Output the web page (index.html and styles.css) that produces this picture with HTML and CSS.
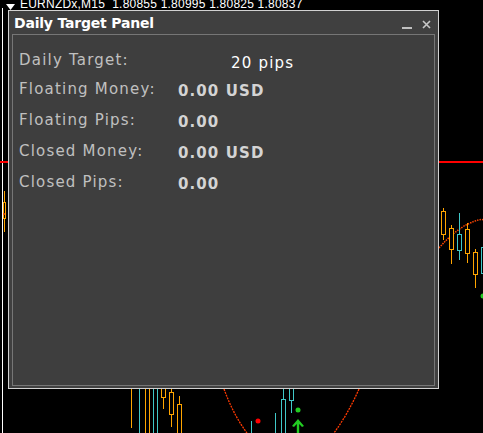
FILE: index.html
```html
<!DOCTYPE html>
<html>
<head>
<meta charset="utf-8">
<link rel="stylesheet" href="styles.css">
</head>
<body>
<div class="screen">
  <svg class="chart" width="483" height="433" viewBox="0 0 483 433">
    <line x1="2.5" y1="8" x2="2.5" y2="433" stroke="#ffffff" stroke-width="1"/>
    <!-- left edge candle -->
    <line x1="4.5" y1="191" x2="4.5" y2="232" stroke="#ffa500"/>
    <rect x="3.5" y="202.5" width="2" height="16" fill="#000" stroke="#ffa500"/>
    <circle cx="4" cy="214" r="1" fill="#ff4500"/>
    <!-- red level line -->
    <rect x="0" y="161" width="483" height="2" fill="#ff0000"/>
    <!-- MA curve -->
    <path d="M439 248 Q 455 230 468 224 T 483 220" fill="none" stroke="#ff4500" stroke-width="1.5" stroke-dasharray="1.5 1"/>
    <!-- right candles -->
    <g fill="none" stroke="#ffa500" stroke-width="1">
      <line x1="443.5" y1="208" x2="443.5" y2="240"/>
      <rect x="441.5" y="211.5" width="4" height="23" fill="#000"/>
      <line x1="451.5" y1="225" x2="451.5" y2="264"/>
      <rect x="449.5" y="228.5" width="4" height="21" fill="#000"/>
      <line x1="467.5" y1="223" x2="467.5" y2="263"/>
      <rect x="465.5" y="229.5" width="4" height="24" fill="#000"/>
      <line x1="475.5" y1="249" x2="475.5" y2="288"/>
      <rect x="473.5" y="252.5" width="4" height="22" fill="#000"/>
    </g>
    <g fill="none" stroke="#40c8c8" stroke-width="1">
      <line x1="459.5" y1="213" x2="459.5" y2="260"/>
      <rect x="457.5" y="234.5" width="4" height="16" fill="#000"/>
      <rect x="481.5" y="247.5" width="4" height="26" fill="#000"/>
    </g>
    <circle cx="483" cy="296" r="2.5" fill="#22cc22"/>
    <!-- bottom left candles -->
    <g fill="none" stroke-width="1">
      <line x1="131.5" y1="389" x2="131.5" y2="428" stroke="#ffa500"/>
      <line x1="139.5" y1="389" x2="139.5" y2="433" stroke="#40c8c8"/>
      <line x1="145.5" y1="389" x2="145.5" y2="433" stroke="#ffa500"/>
      <line x1="149.5" y1="389" x2="149.5" y2="433" stroke="#ffa500"/>
      <line x1="153.5" y1="389" x2="153.5" y2="433" stroke="#40c8c8"/>
      <line x1="157.5" y1="389" x2="157.5" y2="433" stroke="#40c8c8"/>
      <line x1="163.5" y1="389" x2="163.5" y2="409" stroke="#ffa500"/>
      <rect x="161.5" y="388.5" width="4" height="9" fill="#000" stroke="#ffa500"/>
      <line x1="171.5" y1="389" x2="171.5" y2="427" stroke="#ffa500"/>
      <rect x="169.5" y="392.5" width="4" height="22" fill="#000" stroke="#ffa500"/>
      <line x1="179.5" y1="396" x2="179.5" y2="433" stroke="#ffa500"/>
      <rect x="177.5" y="404.5" width="4" height="30" fill="#000" stroke="#ffa500"/>
    </g>
    <!-- bottom curves -->
    <path d="M224 389 Q 234 416 247 433" fill="none" stroke="#ff3a00" stroke-width="1.3" stroke-dasharray="2 1"/>
    <path d="M359 389 Q 348 414 334 433" fill="none" stroke="#ff3a00" stroke-width="1.3" stroke-dasharray="2 1"/>
    <circle cx="258" cy="421" r="2.5" fill="#ff0000"/>
    <g fill="none" stroke="#40c8c8" stroke-width="1">
      <line x1="251.5" y1="421" x2="251.5" y2="433"/>
      <line x1="275.5" y1="413" x2="275.5" y2="433"/>
      <line x1="283.5" y1="389" x2="283.5" y2="399"/>
      <rect x="281.5" y="399.5" width="4" height="36" fill="#000"/>
      <line x1="291.5" y1="400" x2="291.5" y2="413"/>
      <rect x="289.5" y="388.5" width="4" height="12" fill="#000"/>
    </g>
    <circle cx="298" cy="410" r="2.5" fill="#22cc22"/>
    <path d="M298 419 L304 426 L302 427 L299.2 424 L299.2 433 L296.8 433 L296.8 424 L294 427 L292 426 Z" fill="#22cc22"/>
  </svg>

  <div class="symbol-bar">
    <svg class="symbol-arrow" width="9" height="6" viewBox="0 0 9 6"><path d="M0 0 H9 L4.5 6 Z" fill="#fff"/></svg>
    <span class="symbol-text">EURNZDx,M15&nbsp; 1.80855 1.80995 1.80825 1.80837</span>
  </div>

  <div class="window">
    <div class="titlebar">
      <span class="title">Daily Target Panel</span>
      <div class="controls">
        <span class="minimize"></span>
        <svg class="close" width="9" height="9" viewBox="0 0 9 9"><path d="M1 1 L8 8 M8 1 L1 8" stroke="#c8c8c8" stroke-width="1.6"/></svg>
      </div>
    </div>
    <div class="panel">
      <div class="row first">
        <span class="label">Daily Target:</span>
        <span class="target">20 pips</span>
      </div>
      <div class="row">
        <span class="label">Floating Money:</span>
        <span class="value">0.00 USD</span>
      </div>
      <div class="row">
        <span class="label">Floating Pips:</span>
        <span class="value">0.00</span>
      </div>
      <div class="row">
        <span class="label">Closed Money:</span>
        <span class="value">0.00 USD</span>
      </div>
      <div class="row">
        <span class="label">Closed Pips:</span>
        <span class="value">0.00</span>
      </div>
    </div>
  </div>
</div>
</body>
</html>
```

FILE: styles.css
```css
html, body {
  margin: 0;
  padding: 0;
  background: #000;
}

.screen {
  position: relative;
  width: 483px;
  height: 433px;
  overflow: hidden;
  background: #000;
  font-family: "DejaVu Sans", Verdana, sans-serif;
}

.chart {
  position: absolute;
  left: 0;
  top: 0;
}

.symbol-bar {
  position: absolute;
  left: 6px;
  top: -3px;
  display: flex;
  align-items: center;
  gap: 5px;
  color: #fff;
  font-family: "Liberation Sans", Arial, sans-serif;
  font-size: 12px;
  line-height: 12px;
  white-space: nowrap;
}

.symbol-arrow {
  display: block;
  margin-top: 7px;
}

.symbol-text {
  letter-spacing: 0.22px;
}

.window {
  position: absolute;
  left: 8px;
  top: 10px;
  width: 429px;
  height: 377px;
  border: 1px solid #d2d2d2;
  background: #404040;
  display: flex;
  flex-direction: column;
}

.titlebar {
  height: 23px;
  display: flex;
  align-items: center;
  justify-content: space-between;
  padding: 0 7px 0 5px;
}

.title {
  color: #ffffff;
  font-weight: bold;
  font-size: 14px;
  letter-spacing: -0.2px;
  line-height: 23px;
  padding-top: 2px;
}

.controls {
  display: flex;
  align-items: center;
  gap: 10px;
  padding-top: 4px;
}

.minimize {
  display: block;
  width: 10px;
  height: 2px;
  background: #c0c0c0;
  margin-top: 7px;
}

.close {
  display: block;
}

.panel {
  flex: 1;
  margin: 0 3px 2px 3px;
  border: 1px solid #767676;
  background: #3e3e3e;
  padding: 8px 0 0 6px;
}

.row {
  display: flex;
  align-items: flex-start;
  height: 31px;
  line-height: 31px;
  font-size: 15px;
}

.row.first {
  padding-top: 2px;
  height: 29px;
}

.label {
  width: 159px;
  flex: none;
  color: #c0c0c0;
  letter-spacing: 1.2px;
}

.value {
  color: #d4d4d4;
  font-weight: bold;
  letter-spacing: 1.1px;
  padding-top: 2px;
}

.target {
  color: #ffffff;
  letter-spacing: 1.2px;
  padding-top: 3px;
  margin-left: 53px;
}
```
